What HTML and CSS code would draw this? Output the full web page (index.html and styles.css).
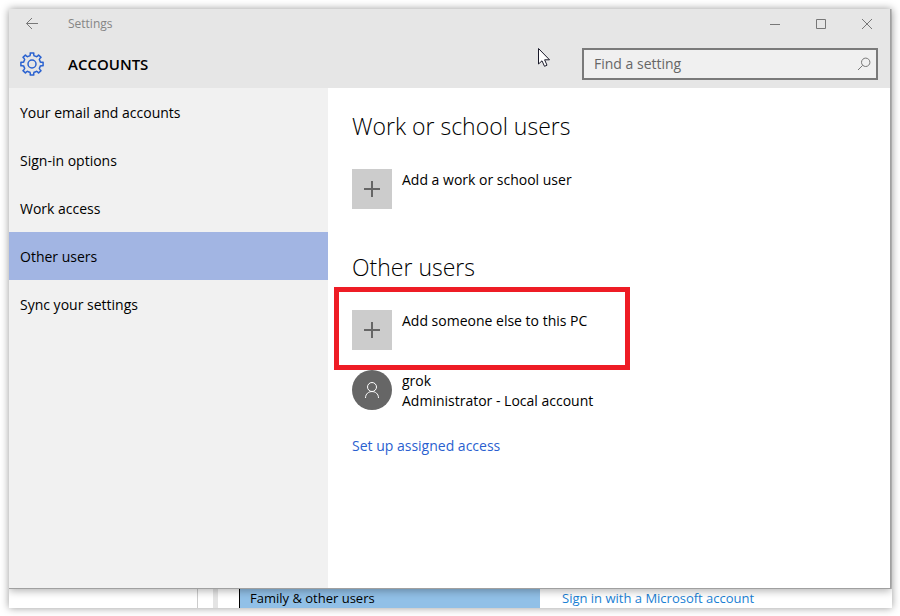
FILE: index.html
```
<!DOCTYPE html>
<html lang="en">
  <head>
    <meta charset="UTF-8" />
    <meta name="viewport" content="width=device-width, initial-scale=1.0" />
    <title>Settings</title>
    <link rel="stylesheet" href="styles.css">
  </head>
  <body>
    <div class="desktop">
      <div class="window">
        <div class="titlebar">
          <button class="title-btn" aria-label="Back">
            <svg width="14" height="14" viewBox="0 0 14 14">
              <path d="M13 6.5H1.5M7 1L1.5 6.5L7 12" />
            </svg>
          </button>
          <span class="title">Settings</span>
          <button class="title-btn" aria-label="Minimize">
            <svg width="12" height="12" viewBox="0 0 12 12">
              <path d="M1 6.5H11" />
            </svg>
          </button>
          <button class="title-btn" aria-label="Maximize">
            <svg width="12" height="12" viewBox="0 0 12 12">
              <path d="M1.5 1.5H10.5V10.5H1.5Z" />
            </svg>
          </button>
          <button class="title-btn" aria-label="Close">
            <svg width="12" height="12" viewBox="0 0 12 12">
              <path d="M1 1L11 11M11 1L1 11" />
            </svg>
          </button>
        </div>

        <header class="header">
          <svg class="gear" width="26" height="26" viewBox="0 0 26 26">
            <path d="M11 4.7Q11.5 3.6 11.2 1.9H14.8Q14.5 3.6 15 4.7Q16.2 5 17.4 5.7Q18.7 5.3 19.6 4L22 6.4Q20.7 7.3 20.3 8.6Q21 9.8 21.3 11Q22.4 11.5 24.1 11.2V14.8Q22.4 14.5 21.3 15Q21 16.2 20.3 17.4Q20.7 18.7 22 19.6L19.6 22Q18.7 20.7 17.4 20.3Q16.2 21 15 21.3Q14.5 22.4 14.8 24.1H11.2Q11.5 22.4 11 21.3Q9.8 21 8.6 20.3Q7.3 20.7 6.4 22L4 19.6Q5.3 18.7 5.7 17.4Q5 16.2 4.7 15Q3.6 14.5 1.9 14.8V11.2Q3.6 11.5 4.7 11Q5 9.8 5.7 8.6Q5.3 7.3 4 6.4L6.4 4Q7.3 5.3 8.6 5.7Q9.8 5 11 4.7Z" />
            <circle cx="13" cy="13" r="4" />
          </svg>
          <h1>ACCOUNTS</h1>
          <div class="search">
            <input type="text" placeholder="Find a setting" aria-label="Find a setting" />
            <svg width="14" height="14" viewBox="0 0 14 14">
              <circle cx="8.7" cy="5.3" r="4.2" />
              <path d="M5.7 8.3L1 13" />
            </svg>
          </div>
        </header>

        <div class="content">
          <nav class="sidebar">
            <a href="#">Your email and accounts</a>
            <a href="#">Sign-in options</a>
            <a href="#">Work access</a>
            <a href="#" class="active">Other users</a>
            <a href="#">Sync your settings</a>
          </nav>

          <main class="main">
            <h2>Work or school users</h2>
            <button class="row">
              <span class="tile">
                <svg width="16" height="16" viewBox="0 0 16 16">
                  <path d="M0 8H16M8 0V16" />
                </svg>
              </span>
              <span class="label">Add a work or school user</span>
            </button>

            <h2>Other users</h2>
            <button class="row highlighted">
              <span class="tile">
                <svg width="16" height="16" viewBox="0 0 16 16">
                  <path d="M0 8H16M8 0V16" />
                </svg>
              </span>
              <span class="label">Add someone else to this PC</span>
            </button>
            <button class="row user">
              <span class="tile avatar">
                <svg width="16" height="18" viewBox="0 0 16 18">
                  <circle cx="8" cy="6" r="4.5" />
                  <path d="M1.5 17C1.5 8.4 14.5 8.4 14.5 17" />
                </svg>
              </span>
              <span class="label">grok<br />Administrator - Local account</span>
            </button>
            <a href="#" class="link">Set up assigned access</a>
          </main>
        </div>
      </div>

      <!-- window underneath -->
      <div class="behind">
        <div class="behind-nav"><span class="scroll"></span></div>
        <div class="behind-item">Family &amp; other users</div>
        <a href="#" class="behind-link">Sign in with a Microsoft account</a>
      </div>
    </div>

    <svg class="cursor" width="14" height="21" viewBox="0 0 14 21">
      <path d="M1.5 1.5V17L5 13.8L7.5 19.3L10 18.2L7.6 12.8H12.5Z" />
    </svg>
  </body>
</html>
```
FILE: styles.css
```
* {
  box-sizing: border-box;
}
body {
  margin: 0;
  padding: 9px 8px 8px 9px;
  height: 100vh;
  display: flex;
  background-color: #fff;
  font-family: "Open Sans", "Segoe UI", sans-serif;
  font-size: 14px;
  line-height: 20px;
  color: #000;
}
h1,
h2 {
  margin: 0;
}
button {
  padding: 0;
  border: none;
  background: none;
  font: inherit;
  color: inherit;
}
a {
  text-decoration: none;
}
svg {
  fill: none;
  stroke: #777;
}

.desktop {
  flex: 1;
  display: flex;
  flex-direction: column;
  padding-right: 1px;
  background-color: #c8c8c8;
  box-shadow: 0 0 8px rgba(0, 0, 0, 0.4);
}
.window {
  flex: 1;
  display: flex;
  flex-direction: column;
  position: relative;
  border-right: 1px solid #a0a0a0;
  border-bottom: 1px solid #a0a0a0;
  background-color: #fff;
  box-shadow: 0 2px 8px rgba(0, 0, 0, 0.3);
  clip-path: inset(0 -1px -20px 0);
}

/* title bar */
.titlebar {
  display: flex;
  height: 30px;
  background-color: #e6e6e6;
}
.title-btn {
  width: 46px;
  display: flex;
  align-items: center;
  justify-content: center;
}
.title {
  flex: 1;
  padding-left: 13px;
  font-size: 12px;
  line-height: 30px;
  color: #858585;
}

/* page header */
.header {
  display: flex;
  align-items: center;
  padding: 9px 12px 8px 10px;
  background-color: #e6e6e6;
}
.gear {
  stroke: #2a62d0;
  stroke-width: 1.5;
  stroke-linejoin: round;
}
h1 {
  flex: 1;
  padding-left: 23px;
  font-size: 15px;
  font-weight: 600;
}
.search {
  width: 296px;
  height: 32px;
  display: flex;
  align-items: center;
  padding: 0 5px 0 10px;
  border: 2px solid #7a7a7a;
  background-color: #f0f0f0;
}
.search input {
  flex: 1;
  min-width: 0;
  padding: 0;
  border: none;
  outline: none;
  background: none;
  font: inherit;
}
.search input::placeholder {
  color: #666;
}

/* navigation */
.content {
  flex: 1;
  display: flex;
}
.sidebar {
  width: 319px;
  background-color: #f1f1f1;
}
.sidebar a {
  display: block;
  padding: 2px 11px 0;
  line-height: 46px;
  color: #000;
}
.sidebar .active {
  background-color: #a2b5e3;
}

/* users */
.main {
  flex: 1;
  padding: 22px 24px;
}
h2 {
  margin-bottom: 27px;
  font-size: 23px;
  font-weight: 300;
  line-height: 32px;
}
.row {
  display: flex;
  gap: 10px;
  position: relative;
  text-align: left;
}
.row + h2 {
  margin-top: 42px;
}
.user {
  margin: 20px 0 25px;
}
.tile {
  width: 40px;
  height: 40px;
  display: flex;
  align-items: center;
  justify-content: center;
  background-color: #ccc;
}
.tile svg {
  stroke: #666;
  stroke-width: 2;
}
.avatar {
  border-radius: 50%;
  background-color: #666;
}
.avatar svg {
  stroke: #fff;
  stroke-width: 1;
}
.label {
  padding-top: 1px;
}
.highlighted::after {
  content: "";
  box-sizing: border-box;
  position: absolute;
  top: -23px;
  left: -18px;
  width: 296px;
  height: 83px;
  border: 5px solid #ee1c25;
}
.link {
  color: #2a5fd0;
}

/* window underneath */
.behind {
  display: flex;
  height: 19px;
  margin-right: -1px;
  background-color: #fff;
  overflow: hidden;
  font-size: 13px;
  line-height: 18px;
}
.behind-nav {
  width: 230px;
  display: flex;
  justify-content: flex-end;
  padding-right: 21px;
}
.scroll {
  width: 21px;
  border-left: 1px solid #ccc;
  border-right: 5px solid #e4e4e4;
}
.behind-item {
  width: 301px;
  padding-left: 10px;
  border-left: 1px solid #000;
  background-color: #91c0e7;
}
.behind-link {
  padding-left: 22px;
  color: #1a7fd4;
}

.cursor {
  position: absolute;
  top: 47px;
  left: 537px;
  fill: #fff;
  stroke: #1a1a2a;
}
```
